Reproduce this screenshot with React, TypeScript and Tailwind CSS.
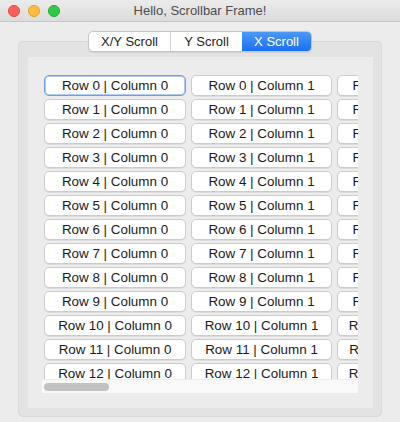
import React from 'react';

const rows = Array.from({ length: 18 }, (_, i) => i);
const colWidths = ['w-[142px]', 'w-[141px]', 'w-[137px]'];

function TrafficLights() {
  return (
    <div className="absolute left-[8px] top-[5px] flex gap-[8px]">
      <span className="h-[12px] w-[12px] rounded-full bg-[#fc605c] border border-[#e2463f]" />
      <span className="h-[12px] w-[12px] rounded-full bg-[#fdbc40] border border-[#e1a116]" />
      <span className="h-[12px] w-[12px] rounded-full bg-[#34c84a] border border-[#1dad2b]" />
    </div>
  );
}

function Tabs() {
  const tabs = [
    { label: 'X/Y Scroll', w: 'w-[81px]', active: false },
    { label: 'Y Scroll', w: 'w-[72px]', active: false },
    { label: 'X Scroll', w: 'w-[69px]', active: true },
  ];
  return (
    <div className="relative z-10 flex justify-center mt-[9px]">
      <div className="flex h-[21px] rounded-[5px] border border-[#c4c4c4] bg-white shadow-[0_1px_1px_rgba(0,0,0,0.08)] overflow-hidden">
        {tabs.map((tab, i) => (
          <div
            key={tab.label}
            className={`${tab.w} flex items-center justify-center text-[13px] leading-none ${
              tab.active
                ? 'bg-gradient-to-b from-[#4a98f8] to-[#1b6ff2] text-white'
                : 'text-[#1d1d1d]'
            } ${i > 0 && !tab.active ? 'border-l border-[#d4d4d4]' : ''}`}
          >
            {tab.label}
          </div>
        ))}
      </div>
    </div>
  );
}

function CellButton({ row, col }: { row: number; col: number }) {
  const focused = row === 0 && col === 0;
  return (
    <div
      className={`${colWidths[col]} h-[21px] shrink-0 flex items-center justify-center whitespace-nowrap rounded-[5px] bg-white text-[13.4px] leading-none text-[#1a1a1a] ${
        focused
          ? 'border border-[#6c9fe8] shadow-[inset_0_0_0_1px_#aecbf4]'
          : 'border border-[#cbcbcb] shadow-[0_1px_0_rgba(0,0,0,0.06)]'
      }`}
    >
      Row {row} | Column {col}
    </div>
  );
}

export default function App() {
  return (
    <div
      className="w-[400px] h-[422px] bg-[#ececec] flex flex-col overflow-hidden"
      style={{ fontFamily: '"Liberation Sans", Arial, sans-serif' }}
    >
      <div className="relative h-[22px] shrink-0 border-b border-[#c6c6c6] bg-gradient-to-b from-[#ebebeb] to-[#dcdcdc] flex items-center justify-center">
        <TrafficLights />
        <span className="text-[13px] text-[#4d4d4d] leading-none">Hello, Scrollbar Frame!</span>
      </div>

      <Tabs />

      <div className="mx-[18px] -mt-[11px] h-[376px] rounded-[5px] border border-[#d9d9d9] bg-[#e3e3e3] pt-[15px] pl-[9px] pr-[8px] pb-[8px]">
        <div className="h-[351px] bg-[#ececec] pt-[16px] pl-[14px]">
          <div className="w-[316px]">
            <div className="h-[306px] overflow-hidden pt-[2px] pl-[2px]">
              <div className="flex flex-col gap-[3px]">
                {rows.map((r) => (
                  <div key={r} className="flex gap-[5px]">
                    {[0, 1, 2].map((c) => (
                      <CellButton key={c} row={r} col={c} />
                    ))}
                  </div>
                ))}
              </div>
            </div>
            <div className="h-[14px] bg-[#f9f9f9] border-t border-[#eeeeee] flex items-center pl-[2px]">
              <div className="h-[8px] w-[65px] rounded-full bg-[#c2c2c2]" />
            </div>
          </div>
        </div>
      </div>
    </div>
  );
}
